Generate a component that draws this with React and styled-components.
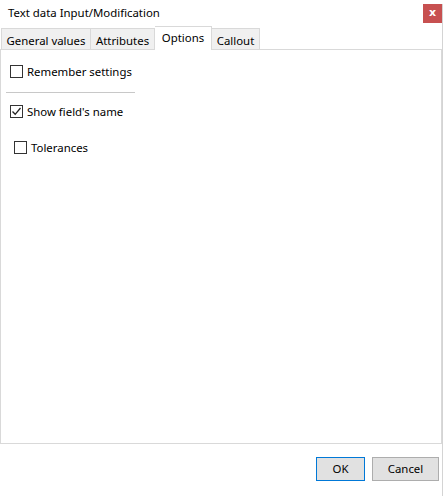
import React from 'react'
import styled, { createGlobalStyle } from 'styled-components'

const Global = createGlobalStyle`
  html, body { margin: 0; padding: 0; background: #fff; }
  body { font-family: "Noto Sans", "Open Sans", sans-serif; font-size: 11.4px; color: #000; }
`

export default function App() {
  const tabs = [
    { label: 'General values', width: 90 },
    { label: 'Attributes', width: 64 },
    { label: 'Options', width: 57, active: true },
    { label: 'Callout', width: 48 },
  ]

  return (
    <Window>
      <Global />
      <Main>
        <TitleBar>
          <Title>Text data Input/Modification</Title>
          <CloseButton>x</CloseButton>
        </TitleBar>
        <TabRow>
          {tabs.map((t) => (
            <Tab key={t.label} $active={t.active} $width={t.width}>
              {t.label}
            </Tab>
          ))}
        </TabRow>
        <Panel>
          <CheckRow $indent={10} $top={15}>
            <Box />
            <span>Remember settings</span>
          </CheckRow>
          <Separator />
          <CheckRow $indent={10} $top={12}>
            <Box $checked>
              <svg width="11" height="11" viewBox="0 0 11 11">
                <path d="M1.5 5.5 L4.2 8.3 L9.5 2" fill="none" stroke="#222" strokeWidth="1.3" />
              </svg>
            </Box>
            <span>Show field's name</span>
          </CheckRow>
          <CheckRow $indent={14} $top={23}>
            <Box />
            <span>Tolerances</span>
          </CheckRow>
        </Panel>
        <Footer>
          <Button $primary>OK</Button>
          <Button $width={67}>Cancel</Button>
        </Footer>
      </Main>
      <EdgeRule />
    </Window>
  )
}

const Window = styled.div`
  width: 444px;
  height: 496px;
  display: flex;
  background: #fff;
`

const Main = styled.div`
  width: 442px;
  display: flex;
  flex-direction: column;
`

const EdgeRule = styled.div`
  width: 1px;
  margin-top: 4px;
  background: #d4d4d4;
`

const TitleBar = styled.div`
  height: 27px;
  display: flex;
  align-items: flex-start;
  justify-content: space-between;
`

const Title = styled.div`
  padding: 5px 0 0 8px;
  line-height: 16px;
`

const CloseButton = styled.div`
  margin-top: 4px;
  width: 19px;
  height: 19px;
  background: #c75050;
  color: #fff;
  font-family: "DejaVu Sans", sans-serif;
  font-weight: bold;
  font-size: 11px;
  line-height: 17px;
  text-align: center;
`

const TabRow = styled.div`
  display: flex;
  align-items: flex-end;
  padding-left: 1px;
  height: 23px;
  margin-bottom: -1px;
  position: relative;
  z-index: 1;
`

const Tab = styled.div`
  width: ${(p) => p.$width}px;
  height: ${(p) => (p.$active ? 24 : 22)}px;
  box-sizing: border-box;
  border: 1px solid #d9d9d9;
  border-bottom: ${(p) => (p.$active ? 'none' : '1px solid #d9d9d9')};
  background: ${(p) => (p.$active ? '#fff' : '#f0f0f0')};
  text-align: center;
  padding-top: ${(p) => (p.$active ? 1 : 2)}px;
  line-height: 20px;
  & + & { border-left: none; }
`

const Panel = styled.div`
  height: 395px;
  box-sizing: border-box;
  border: 1px solid #d9d9d9;
  display: flex;
  flex-direction: column;
`

const CheckRow = styled.label`
  display: flex;
  align-items: center;
  gap: 4px;
  margin-left: ${(p) => p.$indent - 1}px;
  margin-top: ${(p) => p.$top}px;
  height: 13px;
`

const Box = styled.span`
  width: 13px;
  height: 13px;
  box-sizing: border-box;
  border: 1px solid #333;
  background: #fff;
  display: flex;
  align-items: center;
  justify-content: center;
`

const Separator = styled.div`
  width: 129px;
  height: 1px;
  background: #c8c8c8;
  margin: 14px 0 0 5px;
`

const Footer = styled.div`
  display: flex;
  justify-content: flex-end;
  gap: 7px;
  padding: 13px 3px 0 0;
`

const Button = styled.div`
  width: ${(p) => p.$width || 49}px;
  height: 24px;
  box-sizing: border-box;
  border: 1px solid ${(p) => (p.$primary ? '#0078d7' : '#adadad')};
  background: #e1e1e1;
  text-align: center;
  line-height: 22px;
`
